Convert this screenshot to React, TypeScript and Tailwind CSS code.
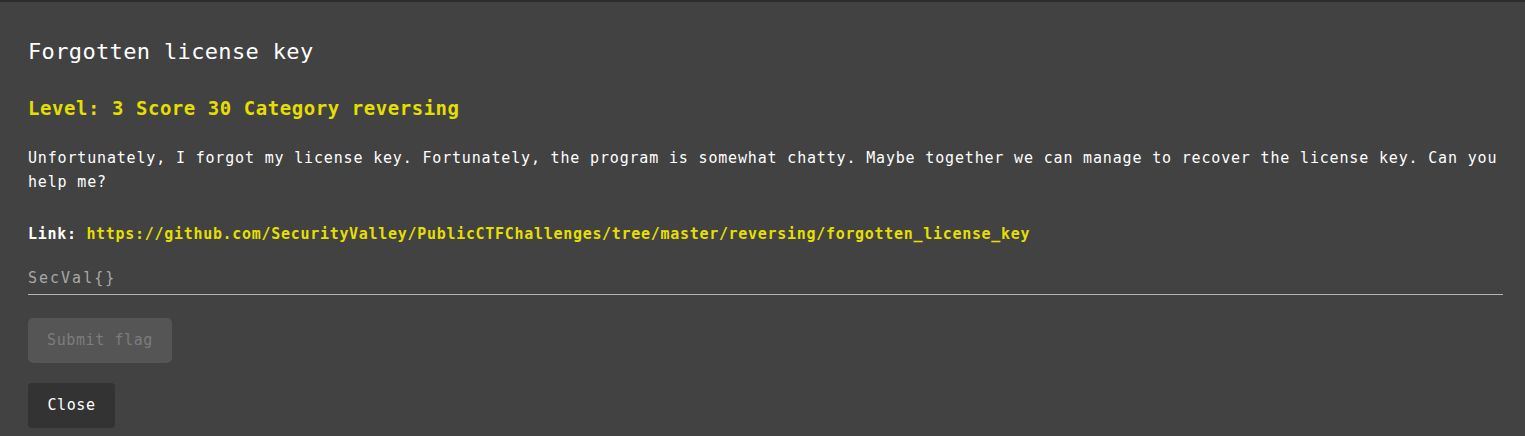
import React from "react";

const mono = "font-['DejaVu_Sans_Mono','Liberation_Mono',monospace]";

export default function App() {
  return (
    <div className={`min-h-[436px] w-full bg-[#424242] border-t-2 border-[#2c2c2c] ${mono}`}>
      <div className="pl-[28px] pr-[22px] pt-[34px] pb-[9px]">
        {/* Title */}
        <h1 className="text-[22px] leading-[32px] tracking-[0.35px] text-white">Forgotten license key</h1>

        {/* Meta */}
        <h2 className="mt-[28px] text-[19px] leading-[24px] font-bold tracking-[0.55px] text-[#e5df00]">
          Level: 3 Score 30 Category reversing
        </h2>

        {/* Description */}
        <p className="mt-[26px] text-[15px] leading-[24px] tracking-[0.83px] text-white">
          Unfortunately, I forgot my license key. Fortunately, the program is somewhat chatty. Maybe together we can
          manage to recover the license key. Can you help me?
        </p>

        <p className="mt-[28px] text-[15px] leading-[24px] font-bold tracking-[0.7px] text-white">
          Link:{" "}
          <a className="text-[#e5df00]" href="#">
            https://github.com/SecurityValley/PublicCTFChallenges/tree/master/reversing/forgotten_license_key
          </a>
        </p>

        {/* Flag input */}
        <input
          type="text"
          placeholder="SecVal{}"
          className="mt-[11px] block w-full h-[38px] pt-[4px] bg-transparent border-b border-[#b5b5b5] text-[15px] tracking-[2px] text-white placeholder-[#a8a8a8] outline-none"
        />

        <button
          disabled
          className="mt-[23px] block h-[45px] w-[144px] rounded-[5px] bg-[#555555] text-[15px] tracking-[0.6px] text-[#7c7c7c]"
        >
          Submit flag
        </button>

        <button className="mt-[20px] block h-[45px] w-[87px] rounded-[4px] bg-[#333333] text-[15px] tracking-[0.6px] text-white">
          Close
        </button>
      </div>
    </div>
  );
}
